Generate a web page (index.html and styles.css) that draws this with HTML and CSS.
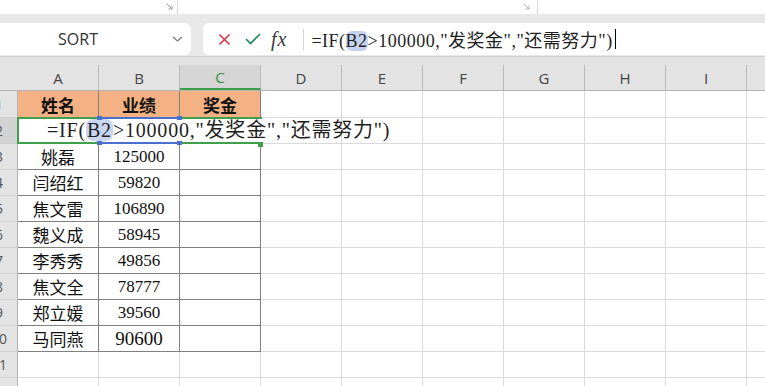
FILE: index.html
```html
<!DOCTYPE html>
<html lang="zh-CN">
<head>
  <meta charset="UTF-8">
  <meta name="viewport" content="width=device-width, initial-scale=1.0">
  <title>SORT</title>
  <link rel="stylesheet" href="styles.css">
</head>
<body>
  <div class="topbar">
    <div class="seg seg-1">
      <svg class="launcher" width="7" height="7" viewBox="0 0 7 7"><path d="M1 1L6 6M6 2.5V6H2.5" stroke="#9a9a9a" fill="none"/></svg>
    </div>
    <div class="seg seg-2">
      <svg class="launcher" width="7" height="7" viewBox="0 0 7 7"><path d="M1 1L6 6M6 2.5V6H2.5" stroke="#b0b0b0" fill="none"/></svg>
    </div>
  </div>

  <div class="toolbar">
    <div class="namebox">
      <span class="name">SORT</span>
      <svg class="chev" width="11" height="6" viewBox="0 0 11 6"><path d="M1 1l4.5 4 4.5-4" stroke="#777" stroke-width="1.2" fill="none"/></svg>
    </div>
    <div class="fbox">
      <svg class="cancel" width="13" height="13" viewBox="0 0 13 13"><path d="M1.5 1.5l10 10M11.5 1.5l-10 10" stroke="#d8334a" stroke-width="1.6"/></svg>
      <svg class="ok" width="16" height="12" viewBox="0 0 16 12"><path d="M1 6l4.5 4.5L15 1" stroke="#1e8a5c" stroke-width="1.6" fill="none"/></svg>
      <span class="fx">fx</span>
      <span class="sep"></span>
      <span class="ftext">=IF(<span class="ref">B2</span>&gt;100000,"发奖金","还需努力")</span><span class="caret"></span>
    </div>
  </div>

  <div class="sheet">
    <div class="grid">
      <div class="corner"></div>
      <div class="ch"><div class="lbl">A</div></div><div class="ch"><div class="lbl">B</div></div><div class="ch sel"><div class="lbl">C</div></div><div class="ch"><div class="lbl">D</div></div><div class="ch"><div class="lbl">E</div></div><div class="ch"><div class="lbl">F</div></div><div class="ch"><div class="lbl">G</div></div><div class="ch"><div class="lbl">H</div></div><div class="ch"><div class="lbl">I</div></div><div class="ch"><div class="lbl">J</div></div>

      <div class="rh"><span>1</span></div><div class="c t h">姓名</div><div class="c t h">业绩</div><div class="c t h">奖金</div><div class="c"></div><div class="c"></div><div class="c"></div><div class="c"></div><div class="c"></div><div class="c"></div><div class="c"></div>
      <div class="rh on"><span>2</span></div><div class="c t"></div><div class="c t"></div><div class="c t"></div><div class="c"></div><div class="c"></div><div class="c"></div><div class="c"></div><div class="c"></div><div class="c"></div><div class="c"></div>
      <div class="rh"><span>3</span></div><div class="c t">姚磊</div><div class="c t">125000</div><div class="c t"></div><div class="c"></div><div class="c"></div><div class="c"></div><div class="c"></div><div class="c"></div><div class="c"></div><div class="c"></div>
      <div class="rh"><span>4</span></div><div class="c t">闫绍红</div><div class="c t">59820</div><div class="c t"></div><div class="c"></div><div class="c"></div><div class="c"></div><div class="c"></div><div class="c"></div><div class="c"></div><div class="c"></div>
      <div class="rh"><span>5</span></div><div class="c t">焦文雷</div><div class="c t">106890</div><div class="c t"></div><div class="c"></div><div class="c"></div><div class="c"></div><div class="c"></div><div class="c"></div><div class="c"></div><div class="c"></div>
      <div class="rh"><span>6</span></div><div class="c t">魏义成</div><div class="c t">58945</div><div class="c t"></div><div class="c"></div><div class="c"></div><div class="c"></div><div class="c"></div><div class="c"></div><div class="c"></div><div class="c"></div>
      <div class="rh"><span>7</span></div><div class="c t">李秀秀</div><div class="c t">49856</div><div class="c t"></div><div class="c"></div><div class="c"></div><div class="c"></div><div class="c"></div><div class="c"></div><div class="c"></div><div class="c"></div>
      <div class="rh"><span>8</span></div><div class="c t">焦文全</div><div class="c t">78777</div><div class="c t"></div><div class="c"></div><div class="c"></div><div class="c"></div><div class="c"></div><div class="c"></div><div class="c"></div><div class="c"></div>
      <div class="rh"><span>9</span></div><div class="c t">郑立媛</div><div class="c t">39560</div><div class="c t"></div><div class="c"></div><div class="c"></div><div class="c"></div><div class="c"></div><div class="c"></div><div class="c"></div><div class="c"></div>
      <div class="rh"><span>10</span></div><div class="c t">马同燕</div><div class="c t big">90600</div><div class="c t"></div><div class="c"></div><div class="c"></div><div class="c"></div><div class="c"></div><div class="c"></div><div class="c"></div><div class="c"></div>
      <div class="rh"><span>11</span></div><div class="c"></div><div class="c"></div><div class="c"></div><div class="c"></div><div class="c"></div><div class="c"></div><div class="c"></div><div class="c"></div><div class="c"></div><div class="c"></div>
      <div class="rh"><span>12</span></div><div class="c"></div><div class="c"></div><div class="c"></div><div class="c"></div><div class="c"></div><div class="c"></div><div class="c"></div><div class="c"></div><div class="c"></div><div class="c"></div>
      <div class="rh"><span>13</span></div><div class="c"></div><div class="c"></div><div class="c"></div><div class="c"></div><div class="c"></div><div class="c"></div><div class="c"></div><div class="c"></div><div class="c"></div><div class="c"></div>
    </div>

    <!-- in-cell editor for C2, overflowing to the right -->
    <div class="editor">=IF(<span class="ref">B2</span>&gt;100000,"发奖金","还需努力")</div>
    <div class="refbox">
      <span class="hd hd-tl"></span><span class="hd hd-tr"></span>
      <span class="hd hd-bl"></span><span class="hd hd-br"></span>
    </div>
    <span class="fill"></span>
  </div>
</body>
</html>
```

FILE: styles.css
```css
* {
  box-sizing: border-box;
}

body {
  margin: 0;
  width: 765px;
  height: 386px;
  overflow: hidden;
  background: #fff;
  font-family: "Liberation Serif", "Noto Sans CJK SC", serif;
}

/* top strip */
.topbar {
  display: flex;
  height: 14px;
  background: #fff;
}

.seg {
  display: flex;
  justify-content: flex-end;
  align-items: flex-start;
  padding-top: 3px;
  border-right: 1px solid #d6d6d6;
}

.seg-1 {
  width: 178px;
  padding-right: 4px;
}

.seg-2 {
  width: 360px;
  padding-right: 7px;
}

/* formula toolbar */
.toolbar {
  display: flex;
  gap: 12px;
  height: 43px;
  padding-top: 9px;
  background: #e8e8e8;
  border-bottom: 1px solid #cfcfcf;
}

.namebox {
  flex: none;
  width: 201px;
  height: 32px;
  margin-left: -10px;
  background: #fff;
  border-radius: 6px;
  display: flex;
  align-items: center;
}

.name {
  flex: 1;
  text-align: center;
  padding-right: 6px;
  font: 16px "Open Sans", "Noto Sans", sans-serif;
  color: #333;
}

.chev {
  margin-right: 8px;
}

.fbox {
  flex: 1;
  height: 32px;
  margin-right: -10px;
  padding-left: 15px;
  background: #fff;
  border-radius: 6px;
  display: flex;
  align-items: center;
}

.ok {
  margin-left: 14px;
}

.fx {
  margin-left: 10px;
  font: italic 20px "Liberation Serif", serif;
  color: #3a3a3a;
  letter-spacing: 1px;
}

.sep {
  width: 1px;
  height: 21px;
  margin-left: 16px;
  background: #d4d4d4;
}

.ftext {
  margin-left: 7px;
  font-size: 18px;
  letter-spacing: 0.5px;
  color: #1f1f1f;
  white-space: nowrap;
}

.ref {
  background: #c6d3ee;
  border-radius: 6px;
}

.caret {
  width: 1px;
  height: 20px;
  margin-left: 2px;
  background: #000;
}

/* sheet grid */
.sheet {
  position: relative;
}

.grid {
  display: grid;
  grid-template-columns: 18px repeat(10, 81px);
  grid-template-rows: 34px 27px repeat(11, 26px);
}

.corner {
  background: #e3e3e3;
  border-bottom: 1px solid #b3b3b3;
}

.ch {
  background: #e3e3e3;
  border-bottom: 1px solid #b3b3b3;
  padding-top: 8px;
}

.lbl {
  height: 25px;
  border-right: 1px solid #b8b8b8;
  display: flex;
  align-items: center;
  justify-content: center;
  font: 15px "Open Sans", "Noto Sans", sans-serif;
  color: #444;
}

.ch.sel .lbl {
  background: #d5d5d5;
  color: #2f8f3f;
  border-bottom: 2px solid #3c9d4a;
}

.rh {
  background: #e3e3e3;
  border-right: 1px solid #b3b3b3;
  border-bottom: 1px solid #d0d0d0;
  display: flex;
  justify-content: flex-end;
  align-items: center;
  overflow: hidden;
  font: 14px "Open Sans", "Noto Sans", sans-serif;
  color: #555;
}

.rh span {
  flex: none;
  width: 36px;
  text-align: center;
}

.rh.on {
  background: #d3d3d3;
}

.c {
  border-right: 1px solid #dadada;
  border-bottom: 1px solid #dadada;
  display: flex;
  align-items: center;
  justify-content: center;
  font-size: 17px;
  color: #111;
  white-space: nowrap;
}

.c.t {
  border-color: #808080;
}

.c.h {
  background: #f4b183;
  font-weight: bold;
}

.c.big {
  font-size: 19px;
}

/* editing overlay */
.editor {
  position: absolute;
  left: 17px;
  top: 60px;
  width: 245px;
  height: 27px;
  padding-left: 28px;
  background: #fff;
  border: 2px solid #3f9f4b;
  border-right: none;
  font-size: 20px;
  line-height: 23px;
  letter-spacing: 0.8px;
  color: #1f1f1f;
  white-space: nowrap;
}

.editor .ref {
  background: #c9d6f1;
  border-radius: 7px;
  padding: 0 1px;
}

.refbox {
  position: absolute;
  left: 98px;
  top: 60px;
  width: 83px;
  height: 27px;
  border-top: 2px solid #4a6fcf;
  border-bottom: 2px solid #4a6fcf;
}

.hd {
  position: absolute;
  width: 5px;
  height: 4px;
  background: #4a6fcf;
}

.hd-tl { left: -1px; top: -3px; }
.hd-tr { right: -1px; top: -3px; }
.hd-bl { left: -1px; bottom: -3px; }
.hd-br { right: -1px; bottom: -3px; }

.fill {
  position: absolute;
  left: 258px;
  top: 85px;
  width: 5px;
  height: 5px;
  background: #3f9f4b;
}
```
